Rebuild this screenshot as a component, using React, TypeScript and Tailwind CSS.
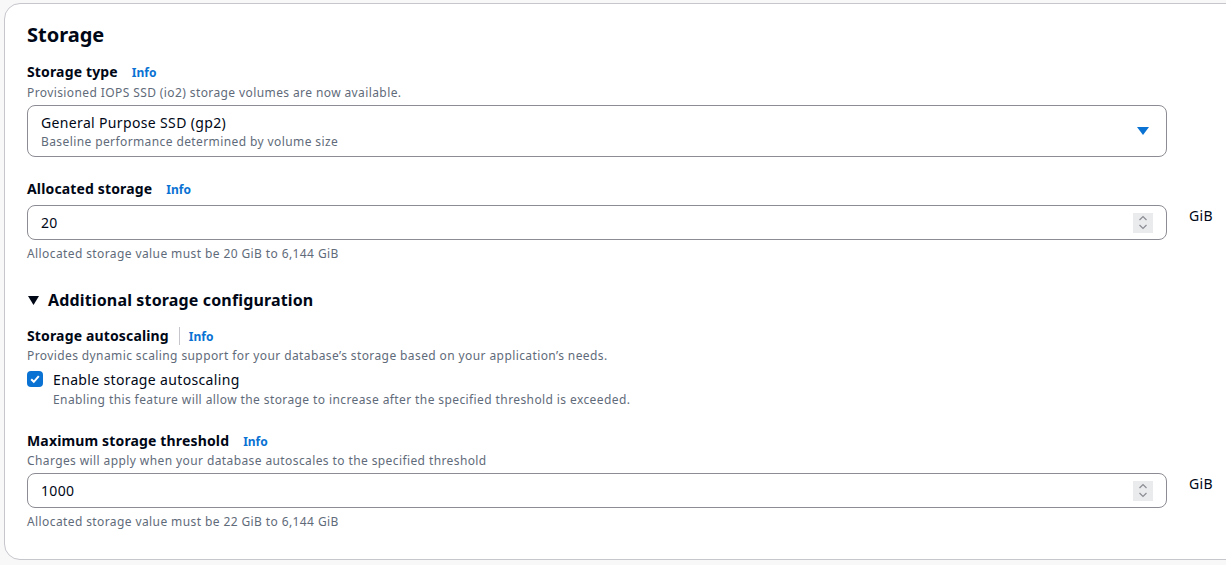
import React from "react";

const font = { fontFamily: '"Noto Sans", "Open Sans", Arial, sans-serif' };

function Info() {
  return <span className="text-[12px] leading-[20px] font-bold text-[#0972d3]">Info</span>;
}

function Spinner() {
  return (
    <div className="w-[20px] h-[20px] bg-[#e9ebed] flex flex-col items-center justify-center gap-[3px]">
      <svg width="10" height="6" viewBox="0 0 10 6" fill="none">
        <path d="M1.5 5L5 1.5L8.5 5" stroke="#8c8c94" strokeWidth="1.2" />
      </svg>
      <svg width="10" height="6" viewBox="0 0 10 6" fill="none">
        <path d="M1.5 1L5 4.5L8.5 1" stroke="#8c8c94" strokeWidth="1.2" />
      </svg>
    </div>
  );
}

function NumberField({ value }: { value: string }) {
  return (
    <div className="flex items-start">
      <div className="w-[1140px] h-[35px] border border-[#8c8c94] rounded-[8px] flex items-center pl-[13px] pr-[13px]">
        <span className="flex-1 text-[14px] tracking-[0.35px] text-[#000716]">{value}</span>
        <Spinner />
      </div>
      <span className="ml-[22px] mt-[1px] text-[14px] leading-[20px] tracking-[0.35px] text-[#000716]">GiB</span>
    </div>
  );
}

function Label({ text }: { text: string }) {
  return (
    <div className="flex items-center h-[22px]">
      <span className="text-[14px] leading-[22px] font-bold tracking-[0.15px]">{text}</span>
      <span className="ml-[14px] flex pt-[2px]"><Info /></span>
    </div>
  );
}

export default function App() {
  return (
    <div className="w-[1226px] h-[565px] overflow-hidden bg-[#f8f8f8]" style={font}>
      <div className="ml-[4px] mt-[3px] w-[1260px] h-[557px] bg-white border border-[#c6c6cd] rounded-[16px] pl-[22px] pt-[19px] text-[#000716]">
        <h2 className="text-[20px] leading-[24px] font-bold">Storage</h2>

        <div className="mt-[14px]">
          <Label text="Storage type" />
        </div>
        <div className="mt-[2px] text-[12px] leading-[16px] tracking-[0.4px] text-[#5f6b7a]">
          Provisioned IOPS SSD (io2) storage volumes are now available.
        </div>
        <div className="mt-[4px] w-[1140px] h-[52px] border border-[#8c8c94] rounded-[8px] flex items-center pl-[13px] pr-[17px]">
          <div className="flex-1 flex flex-col">
            <span className="text-[14px] leading-[22px] tracking-[0.35px]">General Purpose SSD (gp2)</span>
            <span className="text-[12px] leading-[16px] tracking-[0.4px] text-[#5f6b7a]">Baseline performance determined by volume size</span>
          </div>
          <svg width="12" height="8" viewBox="0 0 12 8">
            <path d="M0 0H12L6 8Z" fill="#0972d3" />
          </svg>
        </div>

        <div className="mt-[21px]">
          <Label text="Allocated storage" />
        </div>
        <div className="mt-[5px]">
          <NumberField value="20" />
        </div>
        <div className="mt-[6px] text-[12px] leading-[16px] tracking-[0.4px] text-[#5f6b7a]">
          Allocated storage value must be 20 GiB to 6,144 GiB
        </div>

        <div className="mt-[27px] flex items-center h-[22px]">
          <svg width="11" height="9" viewBox="0 0 11 9" className="ml-[1px]">
            <path d="M0 0H11L5.5 9Z" fill="#000716" />
          </svg>
          <span className="ml-[9px] text-[16px] font-bold tracking-[0.15px]">Additional storage configuration</span>
        </div>

        <div className="mt-[14px] flex items-center h-[22px]">
          <span className="text-[14px] leading-[22px] font-bold tracking-[0.15px]">Storage autoscaling</span>
          <span className="ml-[10px] h-[18px] border-l border-[#c6c6cd]" />
          <span className="ml-[9px] flex pt-[1px]"><Info /></span>
        </div>
        <div className="mt-[1px] text-[12px] leading-[16px] tracking-[0.4px] text-[#5f6b7a]">
          Provides dynamic scaling support for your database’s storage based on your application’s needs.
        </div>
        <div className="mt-[4px] flex items-center h-[22px]">
          <div className="w-[16px] h-[16px] rounded-[4px] bg-[#0972d3] flex items-center justify-center">
            <svg width="12" height="12" viewBox="0 0 12 12" fill="none">
              <path d="M2.2 6.2L4.8 8.8L9.8 3.2" stroke="white" strokeWidth="2" />
            </svg>
          </div>
          <span className="ml-[10px] text-[14px] tracking-[0.35px]">Enable storage autoscaling</span>
        </div>
        <div className="ml-[26px] mt-[2px] text-[12px] leading-[16px] tracking-[0.4px] text-[#5f6b7a]">
          Enabling this feature will allow the storage to increase after the specified threshold is exceeded.
        </div>

        <div className="mt-[22px]">
          <Label text="Maximum storage threshold" />
        </div>
        <div className="mt-[1px] text-[12px] leading-[16px] tracking-[0.4px] text-[#5f6b7a]">
          Charges will apply when your database autoscales to the specified threshold
        </div>
        <div className="mt-[4px]">
          <NumberField value="1000" />
        </div>
        <div className="mt-[6px] text-[12px] leading-[16px] tracking-[0.4px] text-[#5f6b7a]">
          Allocated storage value must be 22 GiB to 6,144 GiB
        </div>
      </div>
    </div>
  );
}
